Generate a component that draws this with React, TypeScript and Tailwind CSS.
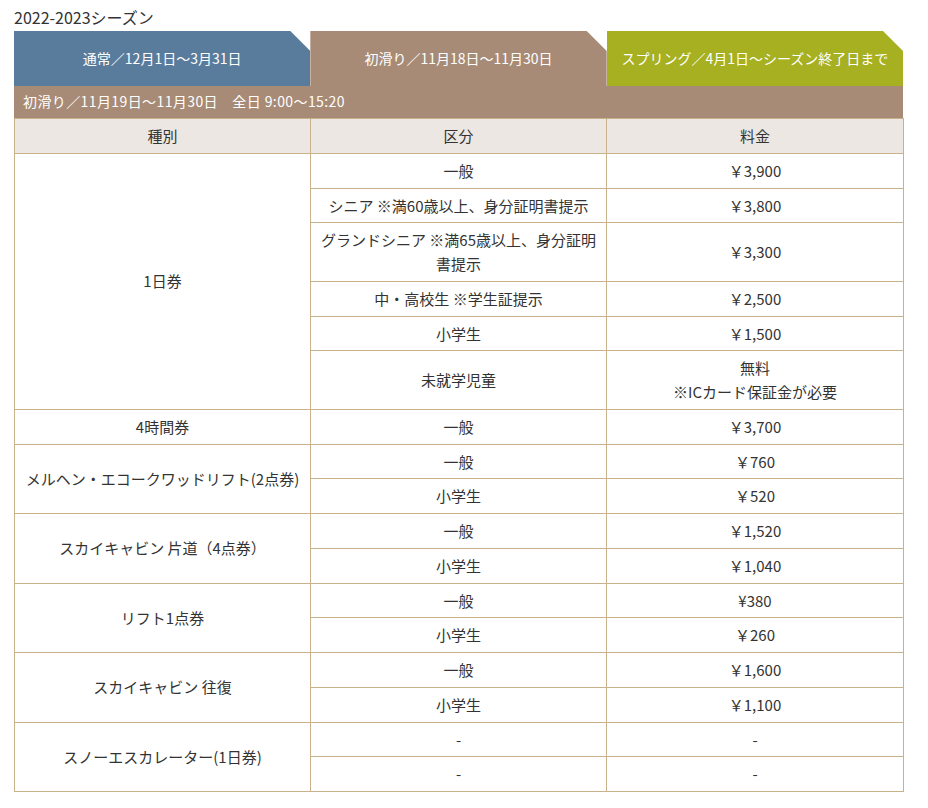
import React from "react";

type Row = { kind?: { text: React.ReactNode; span: number }; cat: React.ReactNode; price: React.ReactNode };

const rows: Row[] = [
  { kind: { text: "1日券", span: 6 }, cat: "一般", price: "￥3,900" },
  { cat: "シニア ※満60歳以上、身分証明書提示", price: "￥3,800" },
  { cat: "グランドシニア ※満65歳以上、身分証明書提示", price: "￥3,300" },
  { cat: "中・高校生 ※学生証提示", price: "￥2,500" },
  { cat: "小学生", price: "￥1,500" },
  {
    cat: "未就学児童",
    price: (
      <>
        無料
        <br />
        ※ICカード保証金が必要
      </>
    ),
  },
  { kind: { text: "4時間券", span: 1 }, cat: "一般", price: "￥3,700" },
  { kind: { text: "メルヘン・エコークワッドリフト(2点券)", span: 2 }, cat: "一般", price: "￥760" },
  { cat: "小学生", price: "￥520" },
  { kind: { text: "スカイキャビン 片道（4点券）", span: 2 }, cat: "一般", price: "￥1,520" },
  { cat: "小学生", price: "￥1,040" },
  { kind: { text: "リフト1点券", span: 2 }, cat: "一般", price: "¥380" },
  { cat: "小学生", price: "￥260" },
  { kind: { text: "スカイキャビン 往復", span: 2 }, cat: "一般", price: "￥1,600" },
  { cat: "小学生", price: "￥1,100" },
  { kind: { text: "スノーエスカレーター(1日券)", span: 2 }, cat: "-", price: "-" },
  { cat: "-", price: "-" },
];

const cell = "border border-[#c9b18b] px-[8px] py-[5px] text-center align-middle font-normal";

export default function App() {
  return (
    <div
      className="min-h-[808px] w-[928px] bg-white text-[#333] text-[15px] leading-[23.75px]"
      style={{ fontFamily: '"Noto Sans CJK JP", "Noto Sans", sans-serif' }}
    >
      <div className="pl-[14px] pt-[5px] text-[16px] leading-[24px]">2022-2023シーズン</div>
      <div className="ml-[14px] mt-[2px] w-[889px]">
        <div className="flex h-[55px] text-white text-[14px]">
          <div className="flex flex-1 items-center justify-center bg-[#5a7c9c] [clip-path:polygon(0_0,calc(100%-20px)_0,100%_20px,100%_100%,0_100%)]">
            通常／12月1日～3月31日
          </div>
          <div className="flex flex-1 items-center justify-center bg-[#a78b76] [clip-path:polygon(0_0,calc(100%-20px)_0,100%_20px,100%_100%,0_100%)]">
            初滑り／11月18日～11月30日
          </div>
          <div className="flex flex-1 items-center justify-center bg-[#a6b020] [clip-path:polygon(0_0,calc(100%-20px)_0,100%_20px,100%_100%,0_100%)]">
            スプリング／4月1日～シーズン終了日まで
          </div>
        </div>
        <div className="flex h-[32px] items-center bg-[#a78b76] pl-[9px] text-white text-[14px] tracking-[0.4px]">
          初滑り／11月19日～11月30日　全日 9:00～15:20
        </div>
        <table className="w-[889px] table-fixed border-collapse">
          <colgroup>
            <col className="w-[296px]" />
            <col className="w-[296px]" />
            <col className="w-[297px]" />
          </colgroup>
          <thead>
            <tr className="bg-[#ece7e2]">
              <th className={cell}>種別</th>
              <th className={cell}>区分</th>
              <th className={cell}>料金</th>
            </tr>
          </thead>
          <tbody>
            {rows.map((r, i) => (
              <tr key={i}>
                {r.kind && (
                  <td className={cell} rowSpan={r.kind.span}>
                    {r.kind.text}
                  </td>
                )}
                <td className={cell}>{r.cat}</td>
                <td className={cell}>{r.price}</td>
              </tr>
            ))}
          </tbody>
        </table>
      </div>
    </div>
  );
}
